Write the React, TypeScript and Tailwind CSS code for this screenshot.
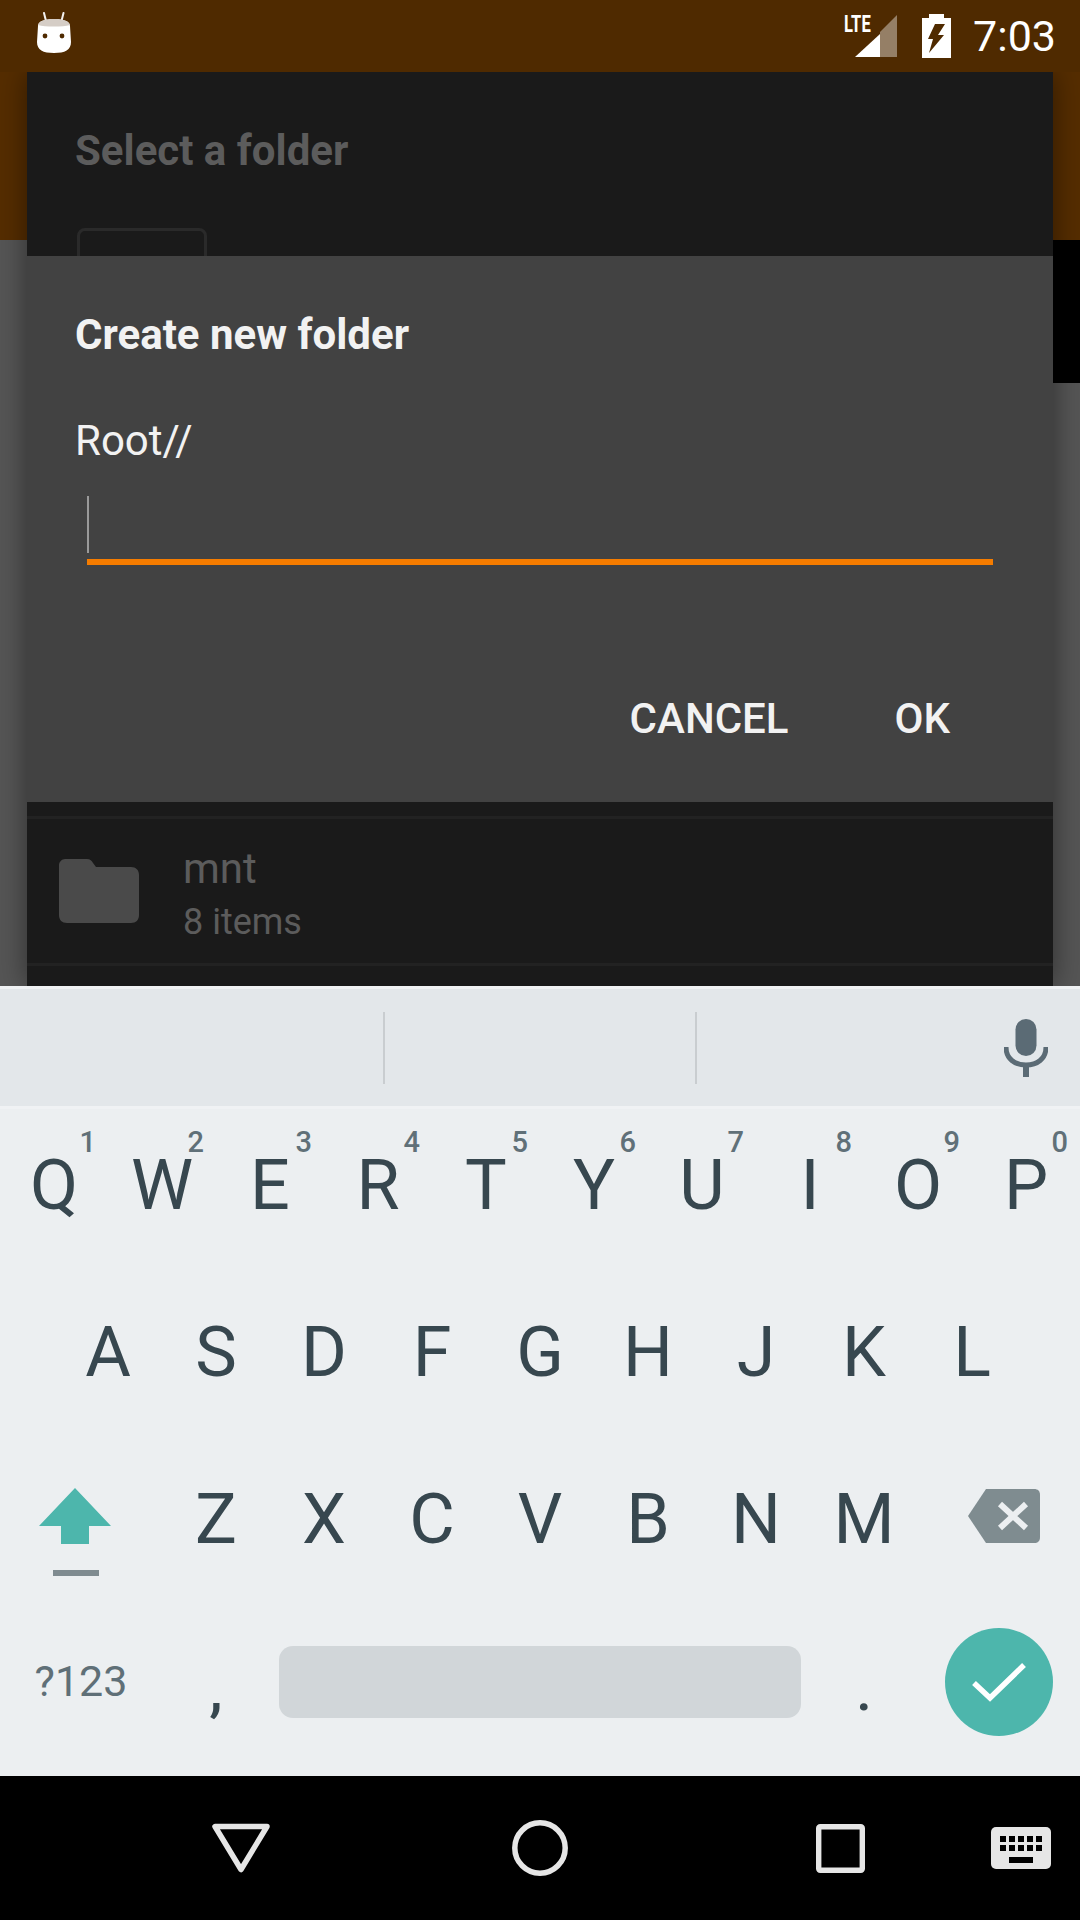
const ROW_ONE = [
  ["Q", "1"],
  ["W", "2"],
  ["E", "3"],
  ["R", "4"],
  ["T", "5"],
  ["Y", "6"],
  ["U", "7"],
  ["I", "8"],
  ["O", "9"],
  ["P", "0"],
];
const ROW_TWO = ["A", "S", "D", "F", "G", "H", "J", "K", "L"];
const ROW_THREE = ["Z", "X", "C", "V", "B", "N", "M"];

const AndroidIcon = () => (
  <svg className="-mt-[6px]" width="34" height="42" viewBox="0 0 34 42">
    <path d="M7 1 L9 9 M26.5 1 L24.5 9" stroke="#f3f0ee" strokeWidth="2" strokeLinecap="round" />
    <path d="M1 14 C1 9 8 7 17 7 C26 7 33 9 33 14 L34 30 C34 38 28 41 17 41 C6 41 0 38 0 30 Z" fill="#fff" />
    <path d="M1 13 C2 9 8 7 17 7 C26 7 32 9 33 13 C26 15 8 15 1 13 Z" fill="#d5cdc6" />
    <circle cx="8" cy="24" r="2.4" fill="#4f2a00" />
    <circle cx="25" cy="24" r="2.4" fill="#4f2a00" />
  </svg>
);

const SignalIcon = () => (
  <div className="relative w-[54px] h-[44px]">
    <span className="absolute left-[1px] top-[0px] text-[23px] leading-[22px] font-bold text-white origin-left scale-x-[0.72]">
      LTE
    </span>
    <svg className="absolute left-0 top-0" width="54" height="44" viewBox="0 0 54 44">
      <path d="M54 1 L54 43 L37 43 L37 18 Z" fill="#fff" fillOpacity="0.4" />
      <path d="M37 20 L37 43 L12 43 Z" fill="#fff" />
    </svg>
  </div>
);

const BatteryIcon = () => (
  <svg width="29" height="44" viewBox="0 0 29 44">
    <path
      d="M7 0 H22 V4 H29 V44 H0 V4 H7 Z M13 10 L6 25 H11 L7 39 L22 21 H16 L23 10 Z"
      fill="#fff"
      fillRule="evenodd"
    />
  </svg>
);

const StatusBar = () => (
  <div className="h-[72px] bg-[#4f2a00] flex items-center justify-between pl-[37px] pr-[24px]">
    <AndroidIcon />
    <div className="flex items-center">
      <SignalIcon />
      <div className="ml-[25px]">
        <BatteryIcon />
      </div>
      <span className="ml-[22px] text-[43px] leading-[48px] text-white">7:03</span>
    </div>
  </div>
);

const FolderBehind = () => (
  <div className="absolute left-[27px] top-0 w-[1026px] h-[914px] bg-[#1a1a1a] shadow-[0_0_27px_rgba(0,0,0,0.45)] overflow-hidden">
    <h2 className="mt-[51px] ml-[48px] text-[42px] leading-[56px] font-bold text-[#5c5c5c]">
      Select a folder
    </h2>
    <div className="mt-[49px] ml-[50px] w-[130px] h-[100px] rounded-[8px] border-[3px] border-[#2a2a2a]" />
    <div className="mt-[488px] h-[3px] bg-[#222222]" />
    <div className="h-[144px] flex items-start pl-[32px]">
      <svg className="mt-[40px]" width="80" height="64" viewBox="0 0 80 64">
        <path
          d="M6 0 H28 C31 0 33 2 34 4 L37 8 H72 C77 8 80 11 80 16 V56 C80 61 77 64 72 64 H8 C3 64 0 61 0 56 V6 C0 3 3 0 6 0 Z"
          fill="#4a4a4a"
        />
      </svg>
      <div className="ml-[44px] mt-[24px]">
        <div className="text-[42px] leading-[52px] text-[#5c5c5c]">mnt</div>
        <div className="text-[36px] leading-[46px] mt-[4px] text-[#5c5c5c]">8 items</div>
      </div>
    </div>
    <div className="h-[3px] bg-[#222222]" />
  </div>
);

const CreateFolderDialog = () => (
  <div className="absolute left-[27px] top-[184px] w-[1026px] h-[546px] bg-[#424242] flex flex-col">
    <h2 className="mt-[51px] ml-[48px] text-[42px] leading-[56px] font-bold text-[#f2f2f2]">
      Create new folder
    </h2>
    <div className="mt-[50px] ml-[48px] text-[42px] leading-[56px] text-[#f2f2f2]">Root//</div>
    <div className="mt-[26px] ml-[60px] w-[906px] h-[70px] border-b-[6px] border-[#f57c00] flex items-start">
      <div className="mt-[1px] w-[2px] h-[57px] bg-[#9a9a9a]" />
    </div>
    <div className="mt-[130px] flex justify-end pr-[103px] gap-[106px]">
      <span className="text-[42px] leading-[48px] font-medium text-[#f2f2f2]">CANCEL</span>
      <span className="text-[42px] leading-[48px] font-medium text-[#f2f2f2]">OK</span>
    </div>
  </div>
);

const Key = ({ label, hint }: { label: string; hint?: string }) => (
  <div className="relative w-[108px] h-full flex items-center justify-center text-[70px] text-[#37474f]">
    <span className="-mt-[14px]">{label}</span>
    {hint && (
      <span className="absolute right-[12px] top-[16px] text-[29px] leading-[34px] font-medium text-[#607078]">
        {hint}
      </span>
    )}
  </div>
);

const SuggestionStrip = () => (
  <div className="h-[124px] bg-[#eceff1] border-t-[3px] border-b-[3px] border-[#f0f2f4] flex items-center relative">
    <div className="absolute inset-0 bg-[#e3e7ea]" />
    <div className="relative ml-[383px] w-[2px] h-[72px] bg-[#c9cdd0]" />
    <div className="relative ml-[310px] w-[2px] h-[72px] bg-[#c9cdd0]" />
    <svg className="relative ml-[307px]" width="44" height="58" viewBox="0 0 44 58">
      <rect x="11.5" y="0" width="21" height="37" rx="10.5" fill="#5b6b75" />
      <path d="M2 28 C2 40 11 46 22 46 C33 46 42 40 42 28" fill="none" stroke="#5b6b75" strokeWidth="5" />
      <rect x="19" y="44" width="6" height="14" fill="#5b6b75" />
    </svg>
  </div>
);

const Keyboard = () => (
  <div className="h-[790px] bg-[#eceff1] flex flex-col">
    <SuggestionStrip />
    <div className="flex-1 flex flex-col">
      <div className="h-[167px] flex">
        {ROW_ONE.map(([label, hint]) => (
          <Key key={label} label={label} hint={hint} />
        ))}
      </div>
      <div className="h-[167px] flex pl-[54px]">
        {ROW_TWO.map((label) => (
          <Key key={label} label={label} />
        ))}
      </div>
      <div className="h-[166px] flex">
        <div className="w-[162px] h-full flex items-center pl-[39px]">
          <svg width="72" height="88" viewBox="0 0 72 88" className="mt-[11px]">
            <path d="M36 0 L72 38 H50 V56 H22 V38 H0 Z" fill="#4db6ac" />
            <rect x="14" y="82" width="46" height="6" fill="#7f8b90" />
          </svg>
        </div>
        {ROW_THREE.map((label) => (
          <Key key={label} label={label} />
        ))}
        <div className="w-[162px] h-full flex items-center pl-[50px]">
          <svg width="72" height="54" viewBox="0 0 72 54" className="-mt-[20px]">
            <path d="M18 0 H66 C70 0 72 2 72 6 V48 C72 52 70 54 66 54 H18 L0 27 Z" fill="#7f8c90" />
            <path d="M32 15 L58 39 M58 15 L32 39" stroke="#eceff1" strokeWidth="6" />
          </svg>
        </div>
      </div>
      <div className="h-[167px] flex items-center pb-[22px]">
        <div className="w-[162px] text-center text-[43px] text-[#5f6f77]">?123</div>
        <div className="w-[108px] text-center text-[60px] text-[#37474f] font-medium mt-[16px]">,</div>
        <div className="w-[9px]" />
        <div className="w-[522px] h-[72px] rounded-[14px] bg-[#d1d6d9]" />
        <div className="w-[9px]" />
        <div className="w-[108px] text-center text-[56px] text-[#37474f] font-medium mt-[18px]">.</div>
        <div className="ml-[27px] w-[108px] h-[108px] rounded-full bg-[#4db6ac] flex items-center justify-center">
          <svg width="54" height="40" viewBox="0 0 54 40">
            <path d="M2 21 L18 36 L52 3" fill="none" stroke="#fff" strokeWidth="5.5" />
          </svg>
        </div>
      </div>
    </div>
  </div>
);

const NavBar = () => (
  <div className="h-[144px] bg-black relative flex items-center">
    <svg className="ml-[212px]" width="58" height="50" viewBox="0 0 58 50">
      <path d="M3 3.5 H55 L29 46.5 Z" fill="none" stroke="#e6e6e6" strokeWidth="5.5" strokeLinejoin="round" />
    </svg>
    <svg className="ml-[242px]" width="56" height="56" viewBox="0 0 56 56">
      <circle cx="28" cy="28" r="25.2" fill="none" stroke="#e6e6e6" strokeWidth="5.5" />
    </svg>
    <svg className="ml-[248px]" width="49" height="49" viewBox="0 0 49 49">
      <rect x="2.7" y="2.7" width="43.6" height="43.6" rx="1.5" fill="none" stroke="#e6e6e6" strokeWidth="5.4" />
    </svg>
    <svg className="ml-[126px]" width="60" height="42" viewBox="0 0 60 42">
      <rect width="60" height="42" rx="5" fill="#e6e6e6" />
      <path
        d="M9 9h6v6h-6z M18 9h6v6h-6z M27 9h6v6h-6z M36 9h6v6h-6z M45 9h6v6h-6z M9 18h6v6h-6z M18 18h6v6h-6z M27 18h6v6h-6z M36 18h6v6h-6z M45 18h6v6h-6z M18 30h24v6h-24z"
        fill="#000"
      />
    </svg>
  </div>
);

export default function App() {
  return (
    <div className="w-[1080px] h-[1920px] flex flex-col overflow-hidden font-['Roboto',sans-serif]">
      <StatusBar />
      <div className="relative h-[914px] bg-[#555555] overflow-hidden">
        <div className="h-[168px] bg-[#552d00]" />
        <div className="absolute right-0 top-[168px] w-[27px] h-[143px] bg-black" />
        <FolderBehind />
        <CreateFolderDialog />
      </div>
      <Keyboard />
      <NavBar />
    </div>
  );
}
